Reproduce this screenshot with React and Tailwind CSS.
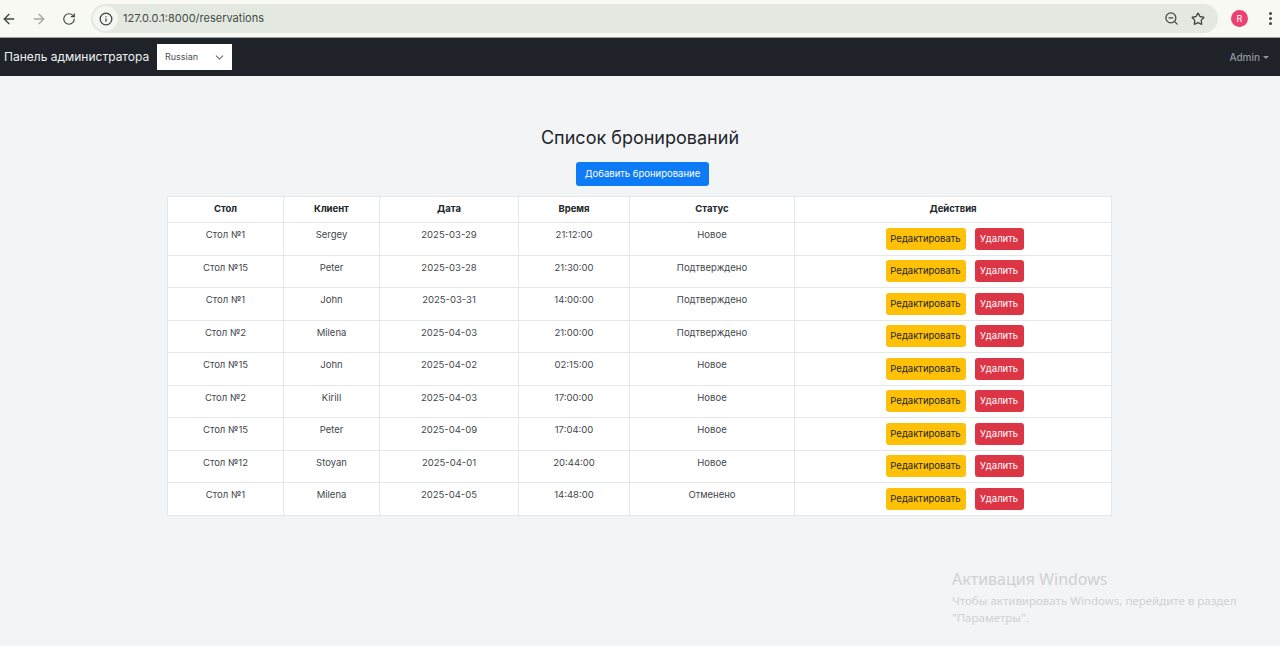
import React from "react";
import { ArrowLeft, ArrowRight, RotateCw, Info, ZoomOut, Star, ChevronDown } from "lucide-react";

const reservations = [
  { table: "Стол №1", client: "Sergey", date: "2025-03-29", time: "21:12:00", status: "Новое" },
  { table: "Стол №15", client: "Peter", date: "2025-03-28", time: "21:30:00", status: "Подтверждено" },
  { table: "Стол №1", client: "John", date: "2025-03-31", time: "14:00:00", status: "Подтверждено" },
  { table: "Стол №2", client: "Milena", date: "2025-04-03", time: "21:00:00", status: "Подтверждено" },
  { table: "Стол №15", client: "John", date: "2025-04-02", time: "02:15:00", status: "Новое" },
  { table: "Стол №2", client: "Kirill", date: "2025-04-03", time: "17:00:00", status: "Новое" },
  { table: "Стол №15", client: "Peter", date: "2025-04-09", time: "17:04:00", status: "Новое" },
  { table: "Стол №12", client: "Stoyan", date: "2025-04-01", time: "20:44:00", status: "Новое" },
  { table: "Стол №1", client: "Milena", date: "2025-04-05", time: "14:48:00", status: "Отменено" },
];

const headers = ["Стол", "Клиент", "Дата", "Время", "Статус", "Действия"];

const BrowserBar = () => (
  <div className="h-[38px] bg-[#f7f9f2] flex items-center text-[#3f4540] border-b border-[#9aa09c]">
    <ArrowLeft className="w-4 h-4 ml-[1px]" strokeWidth={2} />
    <ArrowRight className="w-4 h-4 ml-[14px] text-[#a3a8a4]" strokeWidth={2} />
    <RotateCw className="w-[14px] h-[14px] ml-[15px]" strokeWidth={2} />
    <div className="ml-[15px] w-[1127px] h-[29px] rounded-full bg-[#e3e9e0] flex items-center">
      <div className="ml-[2px] w-[25px] h-[25px] rounded-full bg-[#f4f6f0] flex items-center justify-center">
        <Info className="w-[14px] h-[14px]" strokeWidth={2.2} />
      </div>
      <span className="ml-[5px] text-[11px] text-[#454b47]">127.0.0.1:8000/reservations</span>
      <ZoomOut className="w-[15px] h-[15px] ml-auto" strokeWidth={2} />
      <Star className="w-[14px] h-[14px] ml-[12px] mr-[13px]" strokeWidth={2.2} />
    </div>
    <div className="ml-[13px] w-[17px] h-[17px] rounded-full bg-[#ec3f72] text-white text-[9px] flex items-center justify-center">R</div>
    <div className="ml-[21px] flex flex-col gap-[2px]">
      <span className="w-[3px] h-[3px] rounded-full bg-[#3f4540]" />
      <span className="w-[3px] h-[3px] rounded-full bg-[#3f4540]" />
      <span className="w-[3px] h-[3px] rounded-full bg-[#3f4540]" />
    </div>
  </div>
);

const NavBar = () => (
  <div className="h-[38px] bg-[#1f2329] flex items-center pl-[4px] pr-[11px]">
    <span className="w-[142px] whitespace-nowrap text-[12px] text-[#eef0f1]">Панель администратора</span>
    <div className="ml-[11px] w-[75px] h-[26px] bg-white flex items-center pl-[8px] text-[9px] text-[#4a5056]">
      Russian
      <ChevronDown className="w-[13px] h-[13px] ml-auto mr-[6px] text-[#6b7177]" strokeWidth={2} />
    </div>
    <span className="ml-auto text-[10px] font-medium text-[#8f969e]">Admin</span>
    <span className="ml-[3px] border-x-[3px] border-x-transparent border-t-[3px] border-t-[#8f969e]" />
  </div>
);

const App = () => {
  return (
    <div className="h-[646px] overflow-hidden relative bg-[#f3f4f6] font-['Inter',sans-serif]">
      <BrowserBar />
      <NavBar />

      <div className="flex flex-col items-center pt-[49px]">
        <h1 className="text-[18px] leading-[26px] text-[#212529]">Список бронирований</h1>
        <button className="mt-[11px] ml-[5px] w-[133px] h-[24px] rounded-[3px] bg-[#0d7bf5] text-white text-[9.5px]">
          Добавить бронирование
        </button>

        <table className="mt-[10px] mr-[1px] w-[945px] table-fixed border-collapse bg-white text-[9.5px] text-[#42474c]">
          <colgroup>
            <col className="w-[116px]" />
            <col className="w-[96px]" />
            <col className="w-[139px]" />
            <col className="w-[111px]" />
            <col className="w-[165px]" />
            <col />
          </colgroup>
          <thead>
            <tr className="h-[26px]">
              {headers.map((h) => (
                <th key={h} className="border border-[#e4e7ea] font-bold text-[#212529] text-center">{h}</th>
              ))}
            </tr>
          </thead>
          <tbody>
            {reservations.map((r, i) => (
              <tr key={i} className="h-[32.5px]">
                <td className="border border-[#e4e7ea] text-center pb-[7px]">{r.table}</td>
                <td className="border border-[#e4e7ea] text-center pb-[7px]">{r.client}</td>
                <td className="border border-[#e4e7ea] text-center pb-[7px]">{r.date}</td>
                <td className="border border-[#e4e7ea] text-center pb-[7px]">{r.time}</td>
                <td className="border border-[#e4e7ea] text-center pb-[7px]">{r.status}</td>
                <td className="border border-[#e4e7ea]">
                  <div className="flex justify-center gap-[9px] pl-[3px]">
                    <button className="w-[80px] h-[22px] rounded-[3px] bg-[#ffc107] text-[#212529] text-[9.5px]">Редактировать</button>
                    <button className="w-[49px] h-[22px] rounded-[3px] bg-[#dc3545] text-white text-[9.5px]">Удалить</button>
                  </div>
                </td>
              </tr>
            ))}
          </tbody>
        </table>
      </div>

      {/* windows watermark sits over the page */}
      <div className="absolute left-[952px] top-[569px] text-[#cfd1d4] font-['Noto_Sans',sans-serif]">
        <div className="text-[16px] leading-[21px]">Активация Windows</div>
        <div className="text-[11.5px] leading-[17px] mt-[2px] w-[300px]">
          Чтобы активировать Windows, перейдите в раздел "Параметры".
        </div>
      </div>
    </div>
  );
};

export default App;
